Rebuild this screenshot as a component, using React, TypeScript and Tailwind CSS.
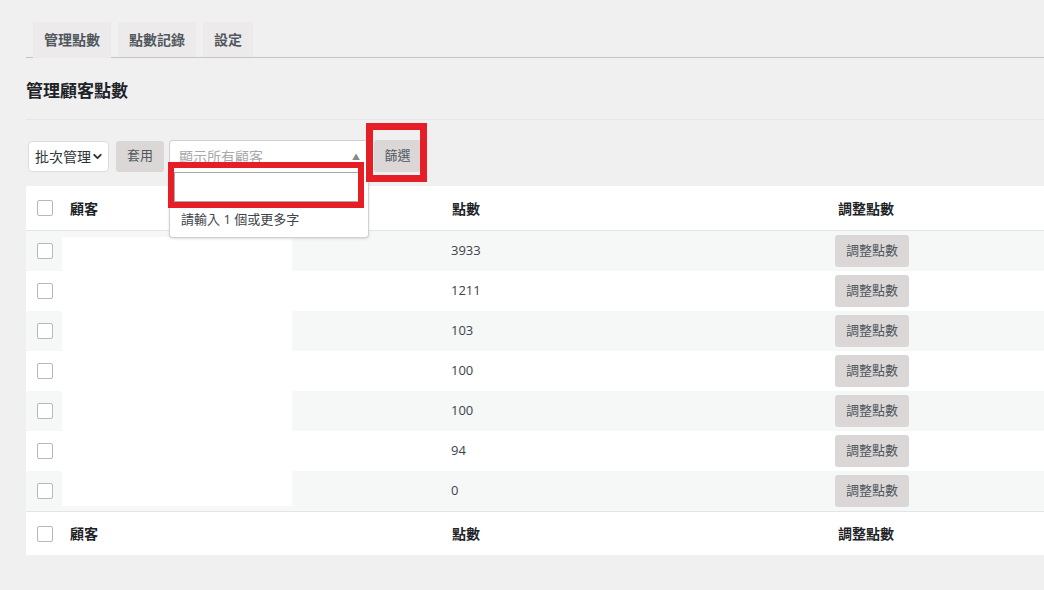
import { ChevronDown } from 'lucide-react';

const FONT = '"Open Sans", "Noto Sans CJK TC", sans-serif';

const TABS = ['管理點數', '點數記錄', '設定'];
const POINTS = [3933, 1211, 103, 100, 100, 94, 0];

function Checkbox() {
  return <span className="block w-4 h-4 bg-white border border-[#b4b9be] rounded-[2px]" />;
}

function HeadRow({ top }: { top?: boolean }) {
  return (
    <div
      className={`flex items-center bg-white text-[14px] font-bold text-[#1d2327]
                  ${top ? 'h-[45px] border-b border-[#e2e4e7]' : 'h-[44px] border-t border-[#e2e4e7]'}`}
    >
      <div className="w-[36px] pl-[11px]"><Checkbox /></div>
      <div className="w-[380px] pl-2">顧客</div>
      <div className="w-[386px] pl-[10px]">點數</div>
      <div className="pl-[10px]">調整點數</div>
    </div>
  );
}

export default function App() {
  return (
    <div
      className="relative min-h-[590px] bg-[#f0f0f1] pl-[26px] overflow-hidden"
      style={{ fontFamily: FONT }}
    >
      {/* Tabs */}
      <nav className="flex items-end pt-[22px] border-b border-[#c3c4c7] gap-[7px] pl-[7px]">
        {TABS.map((t, i) => (
          <span
            key={t}
            className={`h-[35px] px-[11px] flex items-center text-[14px] font-bold text-[#50575e]
                        leading-none ${i === 0 ? 'bg-[#eceaea] -mb-px h-[36px]' : 'bg-[#eceaea]'}`}
          >
            {t}
          </span>
        ))}
      </nav>

      {/* Title */}
      <h2 className="mt-[21px] text-[17px] font-bold text-[#1d2327] leading-[24px]">管理顧客點數</h2>
      <div className="mt-[16px] border-t border-[#e6e6e6]" />

      {/* Controls */}
      <div className="flex items-center mt-[20px] h-[32px]">
        <div className="ml-[2px] w-[81px] h-[31px] bg-white border border-[#dcdcde] rounded-[4px]
                        flex items-center justify-between pl-[6px] pr-[4px] text-[14px] text-[#2c3338]">
          批次管理
          <ChevronDown size={13} strokeWidth={3.5} className="text-[#2c3338]" />
        </div>
        <button className="ml-[7px] w-[48px] h-[31px] bg-[#dcd7d7] rounded-[3px] text-[13px] text-[#50575e]">
          套用
        </button>
        <div className="ml-[5px] w-[200px] h-[32px] bg-white border border-[#d0d0d0] border-b-0 rounded-t-[4px]
                        flex items-center justify-between pl-[9px] pr-[8px] text-[14px] text-[#a7aaad]">
          顯示所有顧客
          <span className="text-[8px] text-[#888]">▲</span>
        </div>
        <button className="ml-[5px] w-[47px] h-[32px] bg-[#dcd7d7] rounded-[3px] text-[13px] text-[#50575e]">
          篩選
        </button>
      </div>

      {/* Table */}
      <div className="mt-[14px] w-[1060px]">
        <HeadRow top />
        {POINTS.map((p, i) => (
          <div
            key={i}
            className={`flex items-center h-[40px] text-[13px] text-[#3c434a] ${i % 2 === 0 ? 'bg-[#f6f7f7]' : 'bg-white'}`}
          >
            <div className="w-[36px] pl-[11px]"><Checkbox /></div>
            <div className="w-[380px]" />
            <div className="w-[386px] pl-[9px]">{p}</div>
            <div className="pl-[7px]">
              <button className="w-[74px] h-[32px] bg-[#dcd7d7] rounded-[3px] text-[13px] text-[#50575e]">
                調整點數
              </button>
            </div>
          </div>
        ))}
        <HeadRow />
      </div>

      {/* Redacted customer names */}
      <div className="absolute left-[62px] top-[237px] w-[230px] h-[269px] bg-white" />

      {/* Select dropdown */}
      <div className="absolute left-[169px] top-[172px] w-[200px] h-[66px] bg-white border border-[#d0d0d0] border-t-0
                      rounded-b-[4px] shadow-sm">
        <div className="mx-[4px] h-[30px] border border-[#aaa] bg-white" />
        <div className="pl-[11px] pt-[7px] text-[13px] text-[#3c434a] leading-[20px]">請輸入 1 個或更多字</div>
      </div>

      {/* Annotation boxes */}
      <div className="absolute left-[168px] top-[162px] w-[196px] h-[46px] border-[6px] border-[#e61e25]" />
      <div className="absolute left-[366px] top-[123px] w-[61px] h-[59px] border-[7px] border-[#e61e25]" />
    </div>
  );
}
